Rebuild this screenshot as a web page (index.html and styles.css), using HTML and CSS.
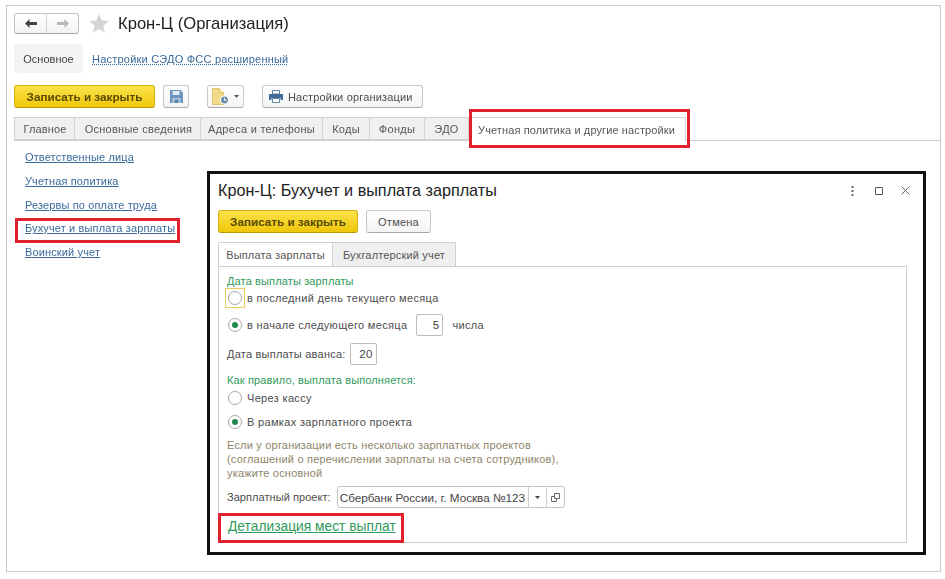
FILE: index.html
```html
<!DOCTYPE html>
<html lang="ru">
<head>
<meta charset="utf-8">
<title>Крон-Ц (Организация)</title>
<link rel="stylesheet" href="styles.css">
</head>
<body>
<div class="frame">
  <header class="head">
    <div class="nav">
      <span class="nav-btn"><svg width="12" height="9" viewBox="0 0 12 9"><path d="M0 4.500 4.500 0v3H12v3H4.500v3z" fill="#444"/></svg></span>
      <span class="nav-btn"><svg width="12" height="9" viewBox="0 0 12 9"><path d="M12 4.500 7.500 0v3H0v3h7.500v3z" fill="#b8b8b8"/></svg></span>
    </div>
    <svg class="star" width="20" height="19" viewBox="0 0 20 19"><path d="M10 0l2.700 6.600 7.100.5-5.500 4.600 1.800 7L10 14.900 3.900 18.700l1.800-7L.2 7.100l7.100-.5z" fill="#d4d4d4"/></svg>
    <h1 class="title">Крон-Ц (Организация)</h1>
  </header>

  <nav class="sections">
    <span class="section-current">Основное</span>
    <a class="section-link" href="#">Настройки СЭДО ФСС расширенный</a>
  </nav>

  <div class="toolbar">
    <button class="btn btn-primary btn-write">Записать и закрыть</button>
    <button class="btn btn-save"><svg width="13" height="13" viewBox="0 0 13 13"><path d="M0 0h10.500L13 2.500V13H0z" fill="#6c96bf"/><path d="M2.500 1h7v4h-7z" fill="#dfe9f2"/><path d="M2.500 8h8v5h-8z" fill="#b4cadf"/><path d="M4.500 9.500h4V13h-4z" fill="#5a83ab"/></svg></button>
    <button class="btn btn-doc"><svg width="18" height="17" viewBox="0 0 18 17"><path d="M.5.500h7l4 4v12H.5z" fill="#f3d98a" stroke="#e0c26c"/><path d="M7.500.500v4h4" fill="#fff3c9" stroke="#e0c26c"/><circle cx="12.500" cy="12" r="4.500" fill="#fff"/><circle cx="12.500" cy="12" r="3.500" fill="#6f8fae"/><path d="M12.500 10v2.200h2" fill="none" stroke="#fff"/></svg><svg class="caret" width="5" height="3" viewBox="0 0 5 3"><path d="M0 0h5L2.500 3z" fill="#555"/></svg></button>
    <button class="btn btn-print"><svg width="14" height="13" viewBox="0 0 14 13"><path d="M3.500.500h7V4h-7z" fill="#fff" stroke="#5f84a6"/><path d="M1 4h12a1 1 0 0 1 1 1v5h-2.500V8h-9v2H0V5a1 1 0 0 1 1-1z" fill="#3f6b92"/><path d="M3.500 8.500h7v4h-7z" fill="#fff" stroke="#5f84a6"/></svg><span>Настройки организации</span></button>
  </div>

  <div class="tabs">
    <span class="tab tab-1">Главное</span>
    <span class="tab tab-2">Основные сведения</span>
    <span class="tab tab-3">Адреса и телефоны</span>
    <span class="tab tab-4">Коды</span>
    <span class="tab tab-5">Фонды</span>
    <span class="tab tab-6">ЭДО</span>
    <span class="tab tab-active">Учетная политика и другие настройки</span>
  </div>

  <ul class="links">
    <li><a href="#">Ответственные лица</a></li>
    <li><a href="#">Учетная политика</a></li>
    <li><a href="#">Резервы по оплате труда</a></li>
    <li><a href="#">Бухучет и выплата зарплаты</a></li>
    <li><a href="#">Воинский учет</a></li>
  </ul>
</div>

<section class="dialog">
  <div class="dialog-head">
    <h2 class="dialog-title">Крон-Ц: Бухучет и выплата зарплаты</h2>
    <div class="win-icons">
      <svg class="win-dots" width="3" height="10" viewBox="0 0 3 10"><path d="M.5 0h2v2h-2zM.5 4h2v2h-2zM.5 8h2v2h-2z" fill="#666"/></svg>
      <svg width="8" height="8" viewBox="0 0 8 8"><path d="M.5.500h7v7h-7z" fill="none" stroke="#555"/></svg>
      <svg width="9" height="9" viewBox="0 0 9 9"><path d="M.5.500l8 8M8.500.500l-8 8" fill="none" stroke="#666"/></svg>
    </div>
  </div>
  <div class="dialog-actions">
    <button class="btn btn-primary btn-dwrite">Записать и закрыть</button>
    <button class="btn btn-cancel">Отмена</button>
  </div>
  <div class="dtabs">
    <span class="dtab dtab-active">Выплата зарплаты</span>
    <span class="dtab">Бухгалтерский учет</span>
  </div>
  <div class="panel">
    <div class="green">Дата выплаты зарплаты</div>
    <div class="row row-first"><span class="focus"><span class="radio"></span></span><span>в последний день текущего месяца</span></div>
    <div class="row row-start"><span class="radio radio-on"></span><span>в начале следующего месяца</span><span class="num num-5">5</span><span class="suffix">числа</span></div>
    <div class="row row-advance"><span>Дата выплаты аванса:</span><span class="num num-20">20</span></div>
    <div class="green green-2">Как правило, выплата выполняется:</div>
    <div class="row row-cash"><span class="radio"></span><span>Через кассу</span></div>
    <div class="row row-project"><span class="radio radio-on"></span><span>В рамках зарплатного проекта</span></div>
    <p class="hint">Если у организации есть несколько зарплатных проектов<br>(соглашений о перечислении зарплаты на счета сотрудников),<br>укажите основной</p>
    <div class="row row-select">
      <span class="select-label">Зарплатный проект:</span>
      <span class="select"><span class="select-text">Сбербанк России, г. Москва №123</span><span class="select-btn"><svg width="5" height="3" viewBox="0 0 5 3"><path d="M0 0h5L2.500 3z" fill="#444"/></svg></span><span class="select-btn"><svg width="9" height="9" viewBox="0 0 9 9"><path d="M3.500.500h5v5h-5zM3.500 3.500h-3v5h5v-3" fill="none" stroke="#666"/></svg></span></span>
    </div>
    <a class="detail" href="#">Детализация мест выплат</a>
  </div>
</section>

<span class="mark mark-tab"></span>
<span class="mark mark-link"></span>
<span class="mark mark-detail"></span>
</body>
</html>
```

FILE: styles.css
```css
* { box-sizing: border-box; }
html, body { margin: 0; padding: 0; }
body {
  width: 945px;
  height: 579px;
  overflow: hidden;
  background: #fff;
  font-family: "Liberation Sans", Arial, sans-serif;
  font-size: 11px;
  color: #4d4d4d;
  position: relative;
  filter: blur(.3px);
}
h1, h2, p, ul { margin: 0; padding: 0; }
a { color: #33608f; }

.frame {
  margin: 5px 0 0 6px;
  width: 935px;
  height: 567px;
  border: 1px solid #c9c9c9;
  padding: 7px 0 0 7px;
}

.head { display: flex; align-items: center; height: 21px; }
.nav {
  display: flex;
  width: 65px;
  height: 21px;
  border: 1px solid #c4c4c4;
  border-bottom-color: #a9a9a9;
  border-radius: 3px;
  background: linear-gradient(#fff, #f3f3f3);
}
.nav-btn { flex: 1; display: flex; align-items: center; justify-content: center; }
.nav-btn + .nav-btn { border-left: 1px solid #d4d4d4; }
.star { margin-left: 10px; }
.title { margin-left: 9px; font-size: 16.600px; font-weight: 400; color: #222; }

.sections { display: flex; align-items: center; margin-top: 10px; height: 29px; }
.section-current {
  width: 69px;
  height: 29px;
  display: flex;
  align-items: center;
  justify-content: center;
  background: #f4f4f4;
  border-radius: 3px;
  font-size: 11px;
  color: #444;
}
.section-link {
  margin-left: 9px;
  font-size: 11px;
  color: #3a6a9c;
  text-decoration: underline dotted;
  letter-spacing: .02em;
}

.toolbar { display: flex; margin-top: 12px; height: 23px; }
.btn {
  font: inherit;
  color: #4d4d4d;
  height: 23px;
  padding: 0;
  display: flex;
  align-items: center;
  justify-content: center;
  background: linear-gradient(#fff, #f4f4f4);
  border: 1px solid #c8c8c8;
  border-bottom-color: #aaa;
  border-radius: 3px;
}
.btn-primary {
  background: linear-gradient(#fbe34a, #f0c60a);
  border-color: #d4b10f;
  border-bottom-color: #b8980c;
  font-weight: 700;
  color: #5a4a00;
  font-size: 11.700px;
}
.btn-write { width: 141px; }
.btn-save { width: 26px; margin-left: 8px; }
.btn-doc { width: 37px; margin-left: 18px; gap: 4px; }
.btn-print {
  width: 161px;
  margin-left: 18px;
  gap: 5px;
  letter-spacing: .015em;
  justify-content: flex-start;
  padding-left: 6px;
}

.tabs {
  display: flex;
  margin: 9px 0 0 0;
  height: 24px;
  border-bottom: 1px solid #cfcfcf;
}
.tab {
  height: 23px;
  display: flex;
  align-items: center;
  justify-content: center;
  background: #f0f0f0;
  border: 1px solid #d2d2d2;
  border-left: 0;
  font-size: 11px;
  letter-spacing: .025em;
  color: #555;
}
.tab-1 { width: 61px; border-left: 1px solid #d2d2d2; letter-spacing: .01em; padding-left: 1px; }
.tab-2 { width: 126px; padding-left: 2px; }
.tab-3 { width: 122px; }
.tab-4 { width: 47px; }
.tab-5 { width: 55px; }
.tab-6 { width: 44px; }
.tab-active {
  width: 216px;
  height: 24px;
  margin-left: 1px;
  padding-right: 3px;
  background: #fff;
  border: 1px solid #d2d2d2;
  border-bottom: 0;
  letter-spacing: .01em;
}

.links {
  list-style: none;
  margin: 10px 0 0 11px;
  display: flex;
  flex-direction: column;
  gap: 10.750px;
}
.links li { height: 13px; line-height: 13px; }
.links a { font-size: 11px; color: #3a6a9c; letter-spacing: .012em; }

.dialog {
  position: absolute;
  left: 207px;
  top: 171px;
  width: 719px;
  height: 384px;
  background: #fff;
  border: 3px solid #111;
  padding: 0 0 0 8px;
}
.dialog-head { display: flex; align-items: center; height: 33px; }
.dialog-title { font-size: 16.200px; font-weight: 400; color: #222; }
.win-icons { margin-left: auto; margin-right: 13px; display: flex; align-items: center; gap: 18px; }
.win-dots { margin-right: 3px; }
.dialog-actions { display: flex; margin-top: 3px; gap: 8px; }
.btn-dwrite { width: 140px; }
.btn-cancel { width: 65px; letter-spacing: .02em; }

.dtabs { display: flex; margin-top: 9px; height: 24px; }
.dtab {
  width: 123px;
  height: 24px;
  display: flex;
  align-items: center;
  justify-content: center;
  background: #efefef;
  border: 1px solid #cfcfcf;
  border-left: 0;
  border-bottom: 0;
  font-size: 11px;
  letter-spacing: .015em;
  color: #555;
}
.dtab-active { width: 115px; background: #fff; border-left: 1px solid #cfcfcf; border-radius: 2px 0 0 0; }

.panel {
  position: relative;
  width: 689px;
  height: 277px;
  border: 1px solid #cfcfcf;
  padding: 8px 0 0 8px;
  font-size: 11px;
  letter-spacing: .03em;
}
.green { color: #2f9a5a; height: 13px; line-height: 13px; letter-spacing: .012em; }
.row { display: flex; align-items: center; }
.row-first { height: 20px; margin-left: -2px; }
.row-start { height: 22px; margin-top: 6px; margin-left: 1px; }
.row-advance { height: 22px; margin-top: 7px; letter-spacing: .02em; }
.row-cash { height: 14px; margin-top: 4px; margin-left: 1px; }
.row-project { height: 14px; margin-top: 10px; margin-left: 1px; }
.green-2 { margin-top: 9px; }
.focus {
  width: 20px;
  height: 20px;
  border: 1px solid #eccb63;
  display: flex;
  align-items: center;
  justify-content: center;
  margin-right: 2px;
}
.radio {
  width: 14px;
  height: 14px;
  border: 1px solid #a8a8a8;
  border-radius: 50%;
  background: #fff;
  margin-right: 5px;
  flex: none;
  display: flex;
  align-items: center;
  justify-content: center;
}
.focus .radio { margin: 0; }
.radio-on::after {
  content: "";
  width: 6px;
  height: 6px;
  border-radius: 50%;
  background: #1e8a50;
}
.num {
  height: 22px;
  border: 1px solid #bdbdbd;
  border-radius: 2px;
  display: flex;
  align-items: center;
  justify-content: flex-end;
  padding-right: 3px;
  color: #444;
  font-size: 11.500px;
}
.num-5 { width: 27px; margin-left: 9px; }
.suffix { margin-left: 9px; }
.num-20 { width: 27px; margin-left: 4px; }
.hint { margin-top: 9px; color: #8f8468; line-height: 14px; letter-spacing: .018em; }
.row-select { margin-top: 6px; height: 22px; }
.select-label { letter-spacing: .005em; }
.select {
  margin-left: 6px;
  display: flex;
  height: 22px;
  border: 1px solid #c4c4c4;
  border-radius: 3px;
  align-items: stretch;
}
.select-text {
  width: 190px;
  display: flex;
  align-items: center;
  padding-left: 2px;
  font-size: 11.700px;
  letter-spacing: 0;
  color: #444;
}
.select-btn {
  width: 18px;
  border-left: 1px solid #d0d0d0;
  display: flex;
  align-items: center;
  justify-content: center;
}
.detail {
  display: block;
  margin-top: 11px;
  margin-left: 1px;
  font-size: 13.800px;
  letter-spacing: 0;
  color: #2f9a5a;
}

.mark { position: absolute; border: 3px solid #e0202e; pointer-events: none; }
.mark-tab { left: 469px; top: 109px; width: 221px; height: 39px; }
.mark-link { left: 15px; top: 218px; width: 165px; height: 25px; }
.mark-detail { left: 218px; top: 513px; width: 186px; height: 30px; }
```
